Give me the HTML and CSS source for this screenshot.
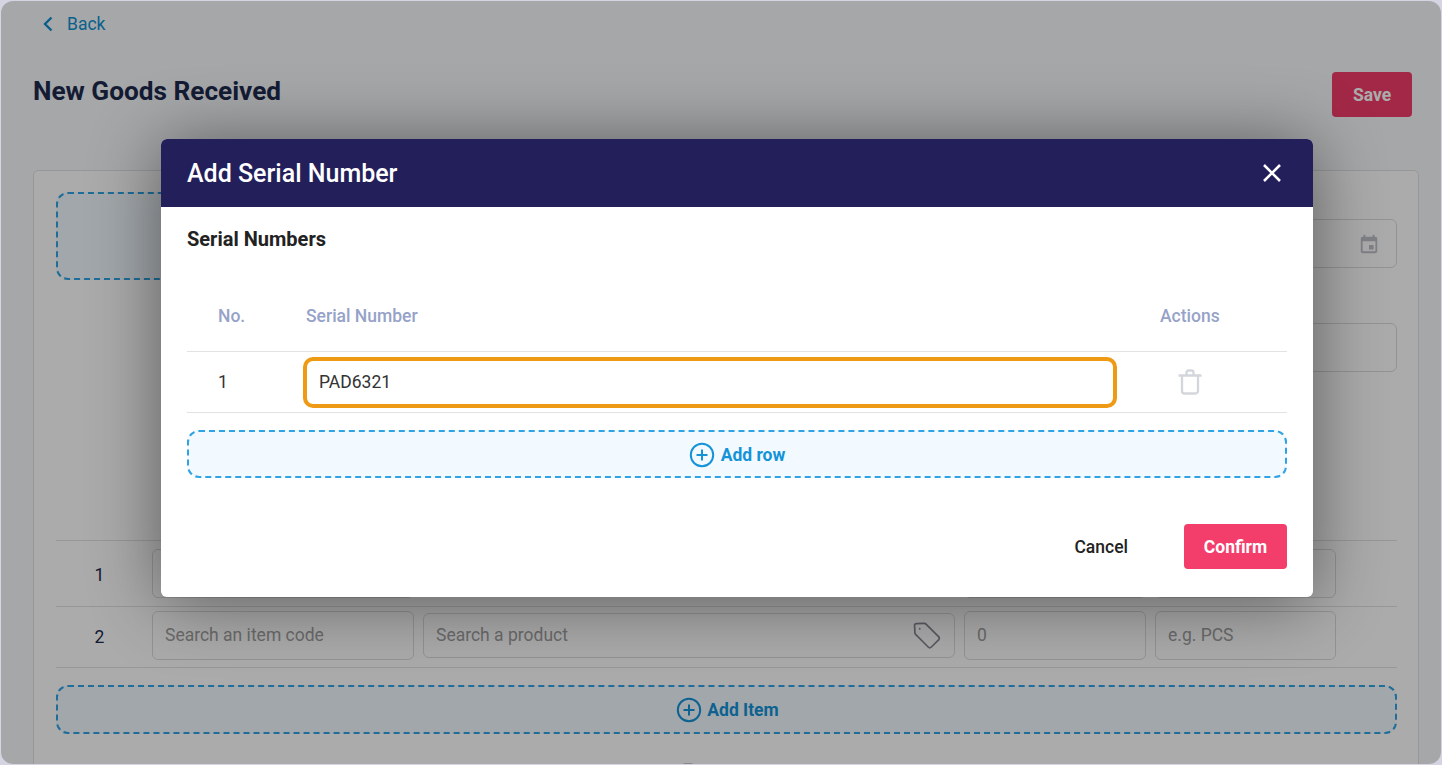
FILE: index.html
```html
<!DOCTYPE html>
<html lang="en">
<head>
<meta charset="utf-8">
<title>New Goods Received</title>
<link rel="stylesheet" href="styles.css">
</head>
<body>
<div class="app">
  <a class="back">
    <svg class="back-icon" width="14" height="18" viewBox="0 0 14 18"><path d="M10.500 2.500 4 9l6.500 6.500" fill="none" stroke="currentColor" stroke-width="2.400"/></svg>
    <span>Back</span>
  </a>
  <header class="page-head">
    <h1>New Goods Received</h1>
    <button class="btn-save">Save</button>
  </header>
  <section class="card">
    <div class="top-row">
      <div class="upload"></div>
      <div class="fields">
        <div class="field field-date">
          <svg width="22" height="22" viewBox="0 0 24 24"><path fill="#bcc0c8" d="M19 4h-1V2h-2v2H8V2H6v2H5a2 2 0 0 0-2 2v14a2 2 0 0 0 2 2h14a2 2 0 0 0 2-2V6a2 2 0 0 0-2-2Zm0 16H5V9h14v11Zm-7-7h5v5h-5v-5Z"/></svg>
        </div>
        <div class="field field-plain"></div>
      </div>
    </div>
    <div class="rows">
      <div class="item-row">
        <span class="num">1</span>
        <div class="cell"></div><div class="cell cell-short"></div><div class="cell"></div><div class="cell"></div>
      </div>
      <div class="item-row">
        <span class="num">2</span>
        <div class="cell">Search an item code</div>
        <div class="cell cell-short cell-tag">Search a product
          <svg width="32" height="32" viewBox="0 0 28 28"><path d="M4 5.500A1.500 1.500 0 0 1 5.500 4l7-.2a2 2 0 0 1 1.500.6l11 11a2 2 0 0 1 0 2.800l-6.300 6.300a2 2 0 0 1-2.800 0l-11-11a2 2 0 0 1-.6-1.500Z" fill="none" stroke="#888991" stroke-width="1.500"/><circle cx="8.500" cy="8.500" r=".8" fill="#888991"/></svg>
        </div>
        <div class="cell">0</div>
        <div class="cell">e.g. PCS</div>
      </div>
    </div>
    <button class="add-item">
      <svg width="26" height="26" viewBox="0 0 26 26"><circle cx="13" cy="13" r="11.200" fill="none" stroke="currentColor" stroke-width="2"/><path d="M13 7.500v11M7.500 13h11" stroke="currentColor" stroke-width="2"/></svg>
      <span>Add Item</span>
    </button>
    <div class="next-mark"></div>
  </section>

  <div class="overlay">
    <div class="modal">
      <div class="modal-head">
        <h2>Add Serial Number</h2>
        <svg width="24" height="24" viewBox="0 0 24 24"><path d="M4 4l16 16M20 4 4 20" stroke="#fff" stroke-width="2.600"/></svg>
      </div>
      <div class="modal-body">
        <h3>Serial Numbers</h3>
        <div class="serial-head">
          <span>No.</span><span>Serial Number</span><span>Actions</span>
        </div>
        <div class="serial-row">
          <span class="serial-num">1</span>
          <div class="serial-input">PAD6321</div>
          <svg class="trash" width="26" height="26" viewBox="0 0 26 26"><path d="M1.500 6.500h23M5 7v15a2.500 2.500 0 0 0 2.500 2.500h11A2.500 2.500 0 0 0 21 22V7M9.500 6V3.500A2 2 0 0 1 11.500 1.500h3a2 2 0 0 1 2 2V6" fill="none" stroke="#d3d6dc" stroke-width="2.300"/></svg>
        </div>
        <button class="add-row">
          <svg width="26" height="26" viewBox="0 0 26 26"><circle cx="13" cy="13" r="11.200" fill="none" stroke="currentColor" stroke-width="2"/><path d="M13 7.500v11M7.500 13h11" stroke="currentColor" stroke-width="2"/></svg>
          <span>Add row</span>
        </button>
        <div class="modal-foot">
          <button class="btn-cancel">Cancel</button>
          <button class="btn-confirm">Confirm</button>
        </div>
      </div>
    </div>
  </div>
</div>
</body>
</html>
```
FILE: styles.css
```css
* { box-sizing: border-box; }
html, body { margin: 0; height: 100%; }
body {
  background: #d4d4e2;
  font-family: Roboto, "Liberation Sans", sans-serif;
  overflow: hidden;
}
button { font-family: inherit; cursor: pointer; }
.app {
  position: relative;
  width: 1440px;
  height: 763px;
  margin: 1px 0 0 1px;
  padding-left: 32px;
  background: #f7fafd;
  border-radius: 12px;
  overflow: hidden;
}
.back {
  display: flex;
  align-items: center;
  gap: 12px;
  height: 45px;
  padding-left: 8px;
  color: #0f8fd0;
  font-size: 17.500px;
}
.page-head {
  display: flex;
  justify-content: space-between;
  align-items: flex-start;
  height: 124px;
  padding: 26px 29px 0 0;
}
h1 {
  margin: 0;
  padding-top: 1px;
  font-size: 26.200px;
  line-height: 36px;
  font-weight: 700;
  color: #1d2a4d;
}
.btn-save {
  width: 80px;
  height: 45px;
  border: 0;
  border-radius: 4px;
  background: #f33d6b;
  color: #fff;
  font-size: 17.500px;
  font-weight: 700;
}
.card {
  width: 1386px;
  height: 620px;
  padding: 21px 21px 21px 22px;
  background: #fff;
  border: 1px solid #e2e2e2;
  border-radius: 5px;
}
.top-row {
  display: flex;
  justify-content: space-between;
  height: 348px;
}
.upload {
  width: 330px;
  height: 88px;
  border: 2px dashed #2fa3e3;
  border-radius: 12px;
  background: #f2faff;
}
.fields {
  display: flex;
  flex-direction: column;
  gap: 55px;
  width: 500px;
  padding-top: 27px;
}
.field {
  height: 49px;
  border: 1px solid #dcdcdc;
  border-radius: 6px;
  display: flex;
  align-items: center;
  justify-content: flex-end;
  padding-right: 16px;
}
.rows { border-top: 1px solid #e2e2e2; }
.item-row {
  display: grid;
  grid-template-columns: 87px 262px 532px 182px 181px;
  column-gap: 9px;
  align-items: center;
  height: 61px;
  padding-bottom: 4px;
  border-bottom: 1px solid #e2e2e2;
}
.item-row:first-child { height: 66px; padding-bottom: 1px; }
.num {
  margin-top: 4px;
  text-align: center;
  font-size: 17.500px;
  color: #1d2a4d;
}
.cell {
  display: flex;
  align-items: center;
  justify-content: space-between;
  height: 49px;
  padding: 0 12px;
  border: 1px solid #dcdcdc;
  border-radius: 6px;
  color: #a0a0a0;
  font-size: 17.500px;
}
.cell-short { height: 45px; }
.cell-tag svg { flex: none; }
.add-item {
  display: flex;
  align-items: center;
  justify-content: center;
  gap: 5px;
  width: 100%;
  height: 49px;
  margin-top: 17px;
  padding-right: 4px;
  border: 2px dashed #2fa3e3;
  border-radius: 12px;
  background: #f2faff;
  color: #1493d8;
  font-size: 17.500px;
  font-weight: 700;
}
.next-mark {
  width: 10px;
  height: 3px;
  margin: 29px 0 0 627px;
  border-radius: 2px 2px 0 0;
  background: #c9c9c9;
}
.overlay {
  position: absolute;
  inset: 0;
  display: flex;
  justify-content: center;
  align-items: flex-start;
  padding: 138px 0 0 32px;
  background: rgba(0, 0, 0, 0.33);
}
.modal {
  position: relative;
  width: 1152px;
  height: 458px;
  background: #fff;
  border-radius: 6px;
  overflow: hidden;
}
.overlay::before {
  content: "";
  position: absolute;
  left: 160px;
  top: 138px;
  width: 1152px;
  height: 458px;
  border-radius: 6px;
  box-shadow: 0 4px 70px rgba(0, 0, 0, 0.47);
}
.modal-head {
  display: flex;
  align-items: center;
  justify-content: space-between;
  height: 68px;
  padding: 0 29px 0 26px;
  background: #221f5b;
}
h2 {
  margin: 0;
  padding-top: 1px;
  font-size: 25px;
  font-weight: 500;
  color: #fff;
}
.modal-body { padding: 20px 26px 0; }
h3 {
  margin: 0;
  font-size: 20px;
  line-height: 24px;
  font-weight: 700;
  color: #222;
}
.serial-head {
  display: grid;
  grid-template-columns: 88px 854px 1fr;
  align-items: center;
  height: 73px;
  margin-top: 28px;
  padding: 1px 0 0 31px;
  border-bottom: 1px solid #e2e2e2;
  color: #96a2c8;
  font-size: 17.500px;
  font-weight: 500;
}
.serial-row {
  display: grid;
  grid-template-columns: 85px 814px 1fr;
  align-items: center;
  height: 61px;
  padding-left: 31px;
  border-bottom: 1px solid #e2e2e2;
  color: #333;
  font-size: 17.500px;
}
.serial-input {
  display: flex;
  align-items: center;
  height: 51px;
  padding-left: 12px;
  border: 4px solid #ee9a15;
  border-radius: 10px;
}
.trash { justify-self: start; margin-left: 60px; }
.add-row {
  display: flex;
  align-items: center;
  justify-content: center;
  gap: 6px;
  width: 100%;
  height: 48px;
  margin-top: 17px;
  padding-top: 3px;
  border: 2px dashed #2fa3e3;
  border-radius: 12px;
  background: #f2faff;
  color: #1493d8;
  font-size: 17.500px;
  font-weight: 700;
}
.modal-foot {
  display: flex;
  justify-content: flex-end;
  align-items: center;
  gap: 56px;
  margin-top: 46px;
}
.btn-cancel {
  padding: 0;
  border: 0;
  background: none;
  color: #222;
  font-size: 17.500px;
  font-weight: 500;
}
.btn-confirm {
  width: 103px;
  height: 45px;
  border: 0;
  border-radius: 4px;
  background: #f33d6b;
  color: #fff;
  font-size: 17.500px;
  font-weight: 700;
}
```
